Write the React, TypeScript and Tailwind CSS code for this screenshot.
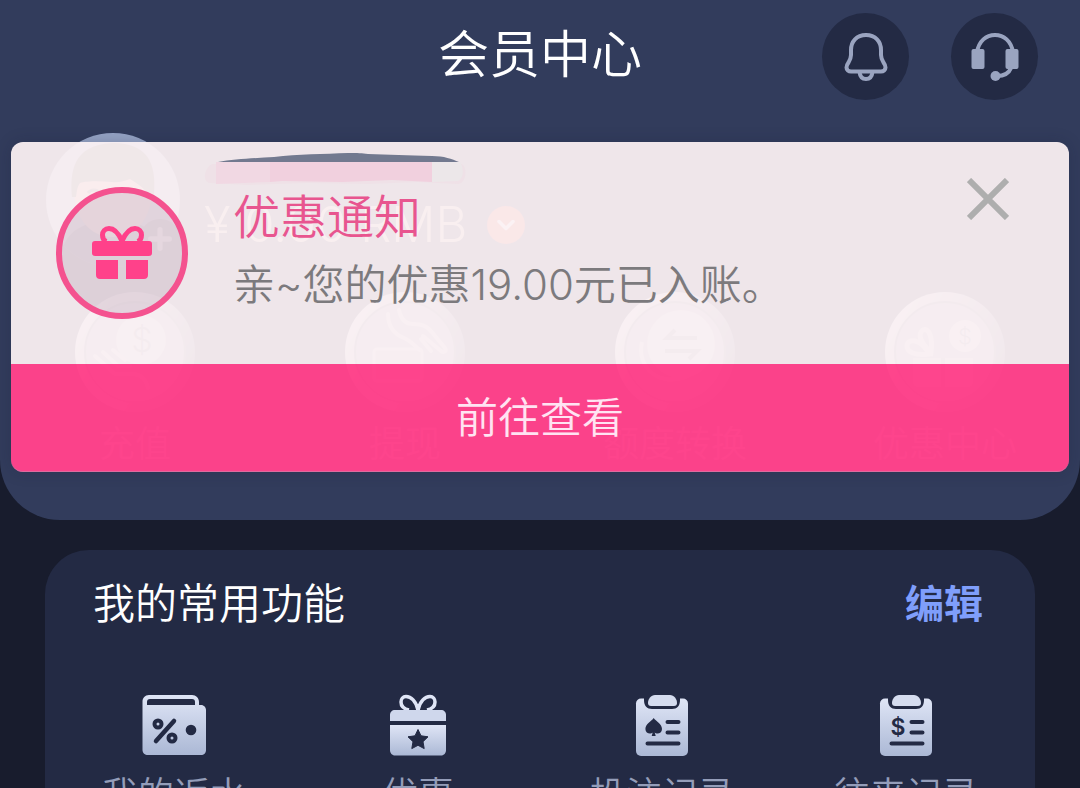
import React from 'react';
import { ChevronDown, Plus } from 'lucide-react';

interface ItemProps {
  label: string;
  icon: React.ReactNode;
}

const INK = '#232a44';

function BellIcon() {
  return (
    <svg viewBox="0 0 44 50" className="w-11 h-[50px]" fill="none" stroke="#9aa4c0" strokeWidth="4">
      <path d="M22 3C12.500 3 7 9.500 7 18v5c0 3-1 5-2.500 7.500C3 32.500 2.500 33.500 2.500 35.500 2.500 38 4.500 39.500 7 39.500h30c2.500 0 4.500-1.500 4.500-4 0-2-.5-3-2-5C38 28 37 26 37 23v-5C37 9.500 31.500 3 22 3Z" />
      <path d="M15.500 40c.5 4.500 3 7 6.500 7s6-2.500 6.500-7" />
    </svg>
  );
}

function HeadsetIcon() {
  return (
    <svg viewBox="0 0 48 50" className="w-12 h-[50px]" fill="none">
      <path d="M6 20C8 9 15 3 24 3s16 6 18 17" stroke="#9aa4c0" strokeWidth="4" />
      <rect x="0.500" y="17" width="13" height="20" rx="2" fill="#9aa4c0" />
      <rect x="34.500" y="17" width="13" height="20" rx="2" fill="#9aa4c0" />
      <path d="M40 36c-2 5-6 8-14 8" stroke="#9aa4c0" strokeWidth="4" />
      <circle cx="24.500" cy="44" r="5" fill="#9aa4c0" />
    </svg>
  );
}

function GiftIcon() {
  return (
    <svg viewBox="0 0 60 54" className="w-[60px] h-[54px]" fill="#ff418a">
      <path
        d="M30 15C26 6 21 2.500 17 2.500c-4 0-6.500 3-6.500 6.500 0 3 1 5.500 4 6.500M30 15C34 6 39 2.500 43 2.500c4 0 6.500 3 6.500 6.500 0 3-1 5.500-4 6.500"
        fill="none"
        stroke="#ff418a"
        strokeWidth="5"
      />
      <rect x="0" y="15" width="60" height="15" rx="3" />
      <path d="M4 34h22v19H8c-2.500 0-4-1.500-4-4V34ZM34 34h22v15c0 2.500-1.500 4-4 4H34V34Z" />
    </svg>
  );
}

function SilverGradient({ id }: { id: string }) {
  return (
    <linearGradient id={id} x1="0" y1="0" x2="0" y2="1">
      <stop offset="0" stopColor="#dfe5f6" />
      <stop offset="1" stopColor="#abb8d5" />
    </linearGradient>
  );
}

function WalletIcon() {
  return (
    <svg viewBox="0 0 66 64" className="w-[66px] h-16">
      <SilverGradient id="wallet" />
      <path
        d="M8 2h43c4 0 7 3 7 7v3h2c3 0 5 2.500 5 5v40c0 3-2 5-5 5H7c-3 0-5.500-2-5.500-5V8.500C1.500 5 4 2 8 2Z"
        fill="url(#wallet)"
      />
      <path d="M6 12V9c0-2 1-3 3-3h42c2 0 3 1 3 3v3Z" fill={INK} />
      <g fill="none" stroke={INK} strokeWidth="4">
        <circle cx="17" cy="31" r="3.500" />
        <circle cx="31" cy="45" r="3.500" />
        <path d="M33 28 15 48" strokeLinecap="round" strokeWidth="4.500" />
      </g>
      <circle cx="50" cy="37" r="5.300" fill={INK} />
    </svg>
  );
}

function StarGiftIcon() {
  return (
    <svg viewBox="0 0 66 64" className="w-[66px] h-16">
      <SilverGradient id="star-gift" />
      <path
        d="M33 17C31 8 26 3.500 21 3.500c-3 0-5 2.500-5 5.500 0 4 3 7 8 8M33 17C35 8 40 3.500 45 3.500c3 0 5 2.500 5 5.500 0 4-3 7-8 8"
        fill="none"
        stroke="#dfe5f6"
        strokeWidth="3.500"
      />
      <path d="M10 17h46c3 0 5 2 5 5v6H5v-6c0-3 2-5 5-5Z" fill="#cfd7ec" />
      <path d="M5 32h56v25c0 3-2 5.500-5 5.500H10c-3 0-5-2.500-5-5.500V32Z" fill="url(#star-gift)" />
      <path
        d="m33 36.500 3 6.300 7 1-5 4.900 1.200 6.900-6.200-3.300-6.200 3.300L28 48.700l-5-4.900 7-1Z"
        fill={INK}
        stroke={INK}
        strokeWidth="1"
        strokeLinejoin="round"
      />
    </svg>
  );
}

function ClipboardIcon({ id, children }: { id: string; children: React.ReactNode }) {
  return (
    <svg viewBox="0 0 66 64" className="w-[66px] h-16">
      <SilverGradient id={id} />
      <rect x="7" y="5.500" width="52" height="57.500" rx="5" fill={`url(#${id})`} />
      <path d="M15 3h36v4c0 6-3 9-8 9H23c-5 0-8-3-8-9Z" fill={INK} />
      <path d="M26 2h15c4 0 7 4 7 8 0 2-1 3-3 3H22c-2 0-3-1-3-3 0-4 3-8 7-8Z" fill="#d5dcef" />
      <path d="M38.500 29h11M38.500 39.500h11M18.500 50.500h31" stroke={INK} strokeWidth="4" strokeLinecap="round" />
      {children}
    </svg>
  );
}

function BetIcon() {
  return (
    <ClipboardIcon id="bet">
      <path
        d="M24.700 25c2 3 8.300 6 8.300 11 0 3-2.300 4.500-4.500 4.500-1.200 0-2-.4-2.800-1l1 3.500h-4l1-3.500c-.8.6-1.600 1-2.800 1-2.200 0-4.500-1.500-4.500-4.500 0-5 6.300-8 8.300-11Z"
        fill={INK}
      />
    </ClipboardIcon>
  );
}

function TransferIcon() {
  return (
    <ClipboardIcon id="transfer">
      <text x="25" y="42" textAnchor="middle" fontSize="23" fontWeight="600" fontFamily="Inter, sans-serif" fill={INK}>
        $
      </text>
    </ClipboardIcon>
  );
}

function Coin({ id, children }: { id: string; children: React.ReactNode }) {
  return (
    <svg viewBox="0 0 120 120" className="w-[120px] h-[120px]" fill="none">
      <linearGradient id={id} x1="0" y1="0" x2="1" y2="0.600">
        <stop offset="0" stopColor="#eef1f8" />
        <stop offset="1" stopColor="#5f6987" />
      </linearGradient>
      <circle cx="60" cy="60" r="60" fill={`url(#${id})`} />
      <circle cx="60" cy="60" r="50" fill="#a4acc2" stroke="#7b849f" strokeWidth="2" />
      {children}
    </svg>
  );
}

function DepositCoin() {
  return (
    <Coin id="deposit">
      <circle cx="66" cy="48" r="25" fill="#ccd2e1" />
      <text x="67" y="60" textAnchor="middle" fontSize="34" fontFamily="Inter, sans-serif" fill="#8a93ad">
        $
      </text>
      <path d="m20 64 20 18h17c8 0 14 5 16 14M28 60l15 14h12M38 58l12 10" stroke="#d4d9e6" strokeWidth="4" strokeLinecap="round" />
    </Coin>
  );
}

function WithdrawCoin() {
  return (
    <Coin id="withdraw">
      <rect x="29" y="57" width="48" height="32" rx="3" fill="#b4bbcd" stroke="#d4d9e6" strokeWidth="3" />
      <path
        d="M43 22c0 12 6 20 16 24 8 3 10 8 16 12M54 18c2 10 7 14 14 14 12 0 16 4 22 12l10 12c2 3-1 5-4 3L78 44M76 47l10 12"
        stroke="#d4d9e6"
        strokeWidth="4"
        strokeLinecap="round"
      />
    </Coin>
  );
}

function ExchangeCoin() {
  return (
    <Coin id="exchange">
      <path d="M27 50c-6 26 18 46 46 34" stroke="#d4d9e6" strokeWidth="4" />
      <circle cx="66" cy="52" r="34" fill="#ccd2e1" />
      <path d="M82 46H52l8-8M50 59h32l-8 8" stroke="#8a93ad" strokeWidth="4" />
    </Coin>
  );
}

function PromoCoin() {
  return (
    <Coin id="promo">
      <path d="M28 66h60v24c0 3-2 5-5 5H33c-3 0-5-2-5-5Z" fill="#c4cada" />
      <path d="M58 66v29" stroke="#9aa3bc" strokeWidth="4" />
      <path d="M44 62c-14 2-22-2-22-8 0-8 14-8 22 8ZM46 60c-10-8-14-18-8-22 6-3 10 8 8 22Z" stroke="#d4d9e6" strokeWidth="5" />
      <circle cx="80" cy="44" r="16" fill="#d4d9e6" />
      <text x="80" y="52" textAnchor="middle" fontSize="22" fontFamily="Inter, sans-serif" fill="#8a93ad">
        $
      </text>
    </Coin>
  );
}

function Avatar() {
  return (
    <div className="relative shrink-0">
      <svg viewBox="0 0 134 134" className="w-[134px] h-[134px]">
        <clipPath id="avatar">
          <circle cx="67" cy="67" r="67" />
        </clipPath>
        <g clipPath="url(#avatar)">
          <rect width="134" height="134" fill="#95a3c4" />
          <path d="M14 134c0-34 20-46 53-46s53 12 53 46Z" fill="#3b456b" />
          <path d="M28 58c0-8 4-12 12-12h54c8 0 12 4 12 12-1 28-16 46-39 46S29 86 28 58Z" fill="#e8a898" />
          <path d="M26 64C24 40 26 12 66 10c42 0 44 28 42 54l-6-2c-4-8-12-12-18-16-6 2-12 4-18 3-12-1-26-1-32 1-3 4-3 8-4 14Z" fill="#4b504f" />
          <path d="M42 60c3-4 9-4 12 0M82 60c3-4 9-4 12 0" fill="none" stroke="#6a5550" strokeWidth="3" />
        </g>
      </svg>
      <span className="absolute right-0 bottom-2 flex items-center justify-center w-10 h-10 rounded-full bg-[#2a3350] text-[#e6eaf6]">
        <Plus className="w-8 h-8" strokeWidth={4} />
      </span>
    </div>
  );
}

function WalletAction({ label, icon }: ItemProps) {
  return (
    <button className="flex flex-col items-center gap-2">
      {icon}
      <span className="text-4xl leading-[48px] text-[#b4bcd2]">{label}</span>
    </button>
  );
}

function Shortcut({ label, icon }: ItemProps) {
  return (
    <button className="flex flex-col items-center gap-[14px]">
      {icon}
      <span className="text-4xl leading-[48px] text-[#949db9]">{label}</span>
    </button>
  );
}

function Notice() {
  return (
    <div role="dialog" aria-labelledby="notice-title" className="absolute inset-x-[11px] top-[142px] rounded-xl shadow-[0_0_16px_rgba(20,25,50,0.2)]">
      <div className="flex items-start pt-9 pr-[60px] pb-[45px] pl-[45px] rounded-t-xl bg-[#fbf1f3]/94">
        <div className="shrink-0 flex items-center justify-center w-[132px] h-[132px] mt-[9px] rounded-full border-6 border-[#f4528f] bg-[#bea7b7]/35">
          <GiftIcon />
        </div>
        <div className="flex-1 flex flex-col gap-2 mt-[9px] ml-[45px]">
          <h2 id="notice-title" className="text-[47px] leading-[60px] text-[#e8558f]">优惠通知</h2>
          <p className="text-[42px] leading-[60px] text-[#7c7a7d]">亲~您的优惠19.00元已入账。</p>
        </div>
        <button aria-label="close" className="shrink-0">
          <svg viewBox="0 0 42 42" className="w-[42px] h-[42px]" stroke="#aeaeae" strokeWidth="6">
            <path d="m2 2 38 38M40 2 2 40" />
          </svg>
        </button>
      </div>
      <button className="block w-full h-[108px] rounded-b-xl border-b border-[#dc6c9f] bg-[#ff428b]/98 text-[42px] text-[#ffe3f2]">
        前往查看
      </button>
      {/* brushed-out account name */}
      <svg viewBox="0 0 264 36" className="absolute top-[10px] left-[193px] w-[264px] h-9">
        <path d="M8 12h250c6 4 4 20-4 20l-40-2-50 2-60-1-60 2-38-2C-2 30 0 16 8 12Z" fill="#efe1e7" />
        <path d="M12 10h54v20l-54 2Z" fill="#f1d8e3" />
        <path d="M66 10h162v20l-40-2-50 2-60-1-12 1Z" fill="#f1d0de" />
        <path d="M228 10h28c4 6 4 16-2 19l-26 1Z" fill="#ece7e9" />
        <path d="M14 10c16-3 38-4 56-5 24-3 50-3 74-4 10 0 14 0 20 1 20 1 40 1 64 2 12 0 20 3 27 6Z" fill="#72798f" />
      </svg>
    </div>
  );
}

export default function App() {
  return (
    <div className="relative h-screen overflow-hidden bg-[#181c2d] font-['Inter','Noto_Sans_CJK_SC',sans-serif] font-[350]">
      <section className="pb-[52px] rounded-b-[60px] bg-[#323c5c]">
        <header className="grid grid-cols-[1fr_auto_1fr] items-center h-[113px] px-[42px]">
          <h1 className="col-start-2 pb-1 text-[51px] leading-[60px] text-white">会员中心</h1>
          <div className="flex justify-end gap-[42px]">
            <button aria-label="notifications" className="flex items-center justify-center w-[87px] h-[87px] rounded-full bg-[#232a44]">
              <BellIcon />
            </button>
            <button aria-label="support" className="flex items-center justify-center w-[87px] h-[87px] rounded-full bg-[#232a44]">
              <HeadsetIcon />
            </button>
          </div>
        </header>

        <div className="flex gap-6 mt-5 pl-[46px]">
          <Avatar />
          <div className="flex items-center gap-5 h-[60px] mt-[62px]">
            <span className="text-[49px] leading-[60px] text-[#d8c8b4]">¥ 0.00 RMB</span>
            <span className="flex items-center justify-center w-[38px] h-[38px] rounded-full bg-[#e8503e] text-white">
              <ChevronDown className="w-7 h-7" strokeWidth={3} />
            </span>
          </div>
        </div>

        <nav className="grid grid-cols-4 mt-[25px]">
          <WalletAction label="充值" icon={<DepositCoin />} />
          <WalletAction label="提现" icon={<WithdrawCoin />} />
          <WalletAction label="额度转换" icon={<ExchangeCoin />} />
          <WalletAction label="优惠中心" icon={<PromoCoin />} />
        </nav>
      </section>

      <section className="mx-[45px] mt-[30px] pt-6 pb-10 rounded-[44px] bg-[#232a44]">
        <div className="flex items-center justify-between px-12">
          <h2 className="text-[42px] leading-[60px] text-white">我的常用功能</h2>
          <button className="pr-1 text-[39px] leading-[60px] font-bold text-[#7f9efb]">编辑</button>
        </div>
        <div className="grid grid-cols-4 mt-[59px] px-[7px]">
          <Shortcut label="我的返水" icon={<WalletIcon />} />
          <Shortcut label="优惠" icon={<StarGiftIcon />} />
          <Shortcut label="投注记录" icon={<BetIcon />} />
          <Shortcut label="往来记录" icon={<TransferIcon />} />
        </div>
      </section>

      <Notice />
    </div>
  );
}
